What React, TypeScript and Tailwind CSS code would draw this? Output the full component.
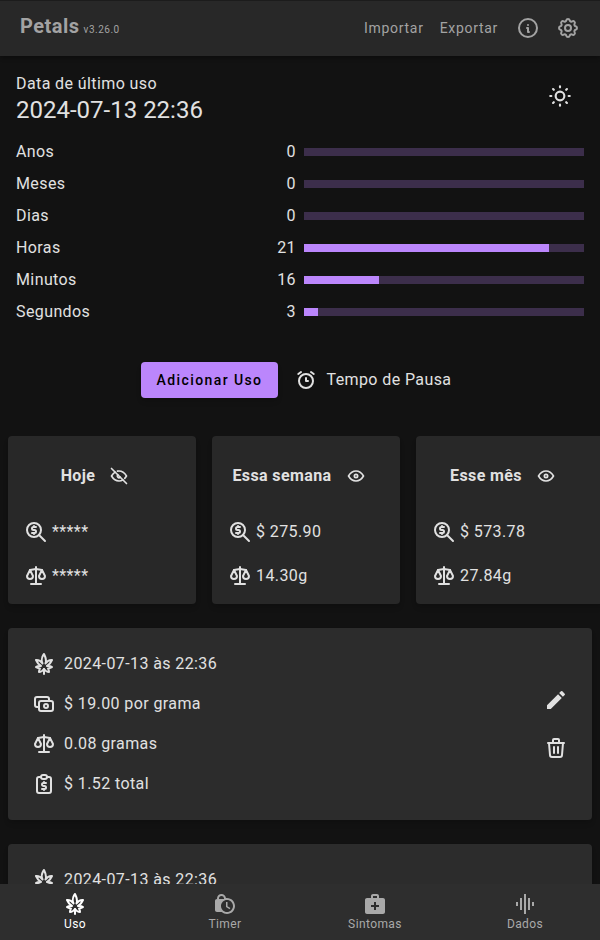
import { useState } from "react";
import type { ReactNode } from "react";
import {
  TbAlarm,
  TbCannabis,
  TbCash,
  TbEye,
  TbEyeOff,
  TbInfoCircle,
  TbReportMoney,
  TbScale,
  TbSettings,
  TbSun,
  TbTrash,
  TbZoomMoney,
} from "react-icons/tb";
import { MdEdit, MdGraphicEq, MdLockClock, MdMedicalServices } from "react-icons/md";

const elapsed = [
  { label: "Anos", value: 0, max: 10 },
  { label: "Meses", value: 0, max: 12 },
  { label: "Dias", value: 0, max: 30 },
  { label: "Horas", value: 21, max: 24 },
  { label: "Minutos", value: 16, max: 60 },
  { label: "Segundos", value: 3, max: 60 },
];

const summaries = [
  { title: "Hoje", cost: "$ 0.00", weight: "0.00g", hidden: true },
  { title: "Essa semana", cost: "$ 275.90", weight: "14.30g", hidden: false },
  { title: "Esse mês", cost: "$ 573.78", weight: "27.84g", hidden: false },
];

const uses = [
  { id: 1, date: "2024-07-13 às 22:36", price: "$ 19.00 por grama", amount: "0.08 gramas", total: "$ 1.52 total" },
  { id: 2, date: "2024-07-13 às 22:36", price: "$ 19.00 por grama", amount: "0.08 gramas", total: "$ 1.52 total" },
];

const tabs = [
  { label: "Uso", icon: <TbCannabis size={24} />, active: true },
  { label: "Timer", icon: <MdLockClock size={24} />, active: false },
  { label: "Sintomas", icon: <MdMedicalServices size={24} />, active: false },
  { label: "Dados", icon: <MdGraphicEq size={24} />, active: false },
];

function IconButton({ label, children }: { label: string; children: ReactNode }) {
  return (
    <button type="button" aria-label={label} className="flex size-12 items-center justify-center">
      {children}
    </button>
  );
}

function Header() {
  return (
    <header className="z-10 flex h-14 shrink-0 items-center justify-between bg-[#282828] pr-3 pl-5 text-[#a3a3a3] shadow-[inset_0_1px_0_#1c1c1c,0_2px_4px_rgba(0,0,0,0.3)]">
      <h1 className="flex items-baseline gap-1 pb-1 text-xl font-bold tracking-wide">
        Petals <span className="text-[10px] font-normal">v3.26.0</span>
      </h1>
      <div className="flex items-center">
        <button type="button" className="h-10 px-2 text-sm tracking-wider">
          Importar
        </button>
        <button type="button" className="mr-0.5 h-10 px-2 text-sm tracking-wider">
          Exportar
        </button>
        <button type="button" aria-label="Informações" className="flex size-10 items-center justify-center">
          <TbInfoCircle size={24} />
        </button>
        <button type="button" aria-label="Configurações" className="flex size-10 items-center justify-center">
          <TbSettings size={24} />
        </button>
      </div>
    </header>
  );
}

function ElapsedRow({ label, value, max }: { label: string; value: number; max: number }) {
  return (
    <div className="grid h-8 grid-cols-2 items-center gap-2">
      <div className="flex justify-between">
        <span>{label}</span>
        <span>{value}</span>
      </div>
      <div
        role="progressbar"
        aria-label={label}
        aria-valuenow={value}
        aria-valuemax={max}
        className="h-2 bg-[#3c2e4b]"
      >
        <div className="h-full bg-[#bb86fc]" style={{ width: `${(value / max) * 100}%` }} />
      </div>
    </div>
  );
}

function SummaryCard({ title, cost, weight, hidden }: (typeof summaries)[number]) {
  const [isHidden, setHidden] = useState(hidden);
  return (
    <article className="w-[188px] shrink-0 rounded bg-[#282828] p-4 shadow-md">
      <div className="flex items-center justify-center">
        <h2 className="font-bold">{title}</h2>
        <button
          type="button"
          aria-label={isHidden ? "Mostrar" : "Ocultar"}
          onClick={() => setHidden(!isHidden)}
          className="flex size-12 items-center justify-center"
        >
          {isHidden ? <TbEyeOff size={20} /> : <TbEye size={20} />}
        </button>
      </div>
      <p className="mt-5 flex items-center gap-1">
        <TbZoomMoney size={24} />
        {isHidden ? "*****" : cost}
      </p>
      <p className="mt-5 flex items-center gap-1">
        <TbScale size={24} />
        {isHidden ? "*****" : weight}
      </p>
    </article>
  );
}

function UseCard({ date, price, amount, total }: (typeof uses)[number]) {
  return (
    <article className="flex items-center justify-between rounded bg-[#2c2c2c] py-6 pr-3 pl-6 shadow-md">
      <div className="flex flex-col gap-4">
        <p className="flex items-center gap-2">
          <TbCannabis size={24} />
          {date}
        </p>
        <p className="flex items-center gap-2">
          <TbCash size={24} />
          {price}
        </p>
        <p className="flex items-center gap-2">
          <TbScale size={24} />
          {amount}
        </p>
        <p className="flex items-center gap-2">
          <TbReportMoney size={24} />
          {total}
        </p>
      </div>
      <div className="flex flex-col">
        <IconButton label="Editar">
          <MdEdit size={24} />
        </IconButton>
        <IconButton label="Excluir">
          <TbTrash size={24} />
        </IconButton>
      </div>
    </article>
  );
}

export default function App() {
  return (
    <div className="flex h-screen flex-col bg-[#121212] font-['Roboto','Noto_Sans',sans-serif] text-base tracking-wide text-[#e1e1e1]">
      <Header />
      <main className="min-h-0 flex-1 overflow-y-auto pt-4 [scrollbar-width:none]">
        <section className="px-4">
          <div className="mb-3 flex items-start justify-between">
            <div>
              <p>Data de último uso</p>
              <p className="text-2xl leading-7 tracking-normal">2024-07-13 22:36</p>
            </div>
            <IconButton label="Alternar tema">
              <TbSun size={26} />
            </IconButton>
          </div>
          {elapsed.map((item) => (
            <ElapsedRow key={item.label} {...item} />
          ))}
        </section>

        <div className="flex items-center justify-center gap-2 pt-7 pb-8">
          <button
            type="button"
            className="h-9 rounded bg-[#bb86fc] px-4 text-sm font-medium tracking-widest text-black shadow-md"
          >
            Adicionar Uso
          </button>
          <button type="button" className="flex h-12 items-center gap-2 px-2">
            <TbAlarm size={24} />
            Tempo de Pausa
          </button>
        </div>

        <section className="flex gap-4 overflow-x-auto px-2 pb-6 [scrollbar-width:none]">
          {summaries.map((item) => (
            <SummaryCard key={item.title} {...item} />
          ))}
        </section>

        <section className="flex flex-col gap-6 px-2 pb-6">
          {uses.map((item) => (
            <UseCard key={item.id} {...item} />
          ))}
        </section>
      </main>

      <nav className="grid h-14 shrink-0 grid-cols-4 bg-[#2e2e2e]">
        {tabs.map((tab) => (
          <a
            key={tab.label}
            href="#"
            className={
              tab.active
                ? "flex flex-col items-center pt-2 text-xs text-white"
                : "flex flex-col items-center pt-2 text-xs text-[#a9a9a9]"
            }
          >
            {tab.icon}
            {tab.label}
          </a>
        ))}
      </nav>
    </div>
  );
}
